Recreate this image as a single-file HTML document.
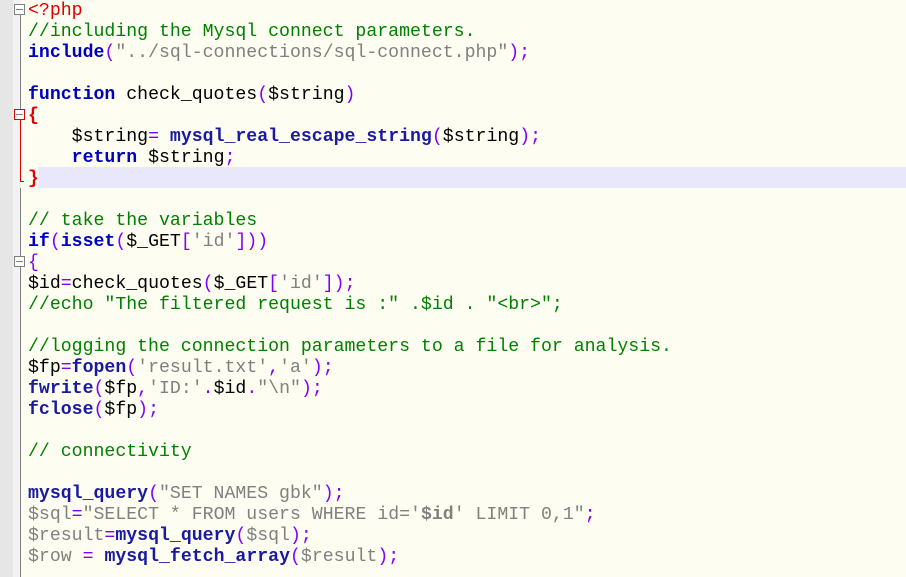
<!DOCTYPE html>
<html><head><style>
body{margin:0;width:906px;height:577px;background:#fefdf2;overflow:hidden;position:relative}
.g1{position:absolute;left:0;top:0;width:13px;height:577px;background:#e6e6e6}
.g2{position:absolute;left:13px;top:0;width:8px;height:577px;background:#f2f2f2}
.vl{position:absolute;left:20px;width:1px;background:#808080}
.hl{position:absolute;left:38px;top:167px;width:868px;height:21px;background:#e8e8fa}
.box{position:absolute;left:14px;width:11px;height:11px;border:1px solid #808080;background:#fff;box-sizing:border-box}
.box:after{content:"";position:absolute;left:1px;top:4px;width:7px;height:1px;background:#808080}
pre{position:absolute;left:28px;top:1px;margin:0;font-family:"Liberation Mono","Courier New",monospace;font-size:18.2px;line-height:21px;color:#000}
.k{color:#0000c0;font-weight:bold}
.f{font-weight:bold;color:#1a1aa0}
.o{color:#8000ff}
.s{color:#808080}
.c{color:#008000}
.r{color:#e00000}
.rb{color:#e00000;font-weight:bold}
.sb{color:#808080;font-weight:bold}
</style></head><body>
<div class="g1"></div><div class="g2"></div>
<div class="vl" style="top:15px;height:97px"></div>
<div class="vl" style="top:112px;height:70px;background:#e00000"></div>
<div style="position:absolute;left:20px;top:181px;width:4px;height:1px;background:#e00000"></div>
<div class="vl" style="top:188px;height:389px"></div>
<div class="hl"></div>
<div class="box" style="top:4px"></div>
<div class="box" style="top:109px;border-color:#e00000"></div>
<div class="box" style="top:256px"></div>
<pre><span class="r">&lt;?php</span>
<span class="c">//including the Mysql connect parameters.</span>
<span class="k">include</span><span class="o">(</span><span class="s">"../sql-connections/sql-connect.php"</span><span class="o">);</span>

<span class="k">function</span> check_quotes<span class="o">(</span>$string<span class="o">)</span>
<span class="rb">{</span>
    $string<span class="o">=</span> <span class="f">mysql_real_escape_string</span><span class="o">(</span>$string<span class="o">);</span>
    <span class="k">return</span> $string<span class="o">;</span>
<span class="rb">}</span>

<span class="c">// take the variables</span>
<span class="k">if</span><span class="o">(</span><span class="k">isset</span><span class="o">(</span>$_GET<span class="o">[</span><span class="s">'id'</span><span class="o">]))</span>
<span class="o">{</span>
$id<span class="o">=</span>check_quotes<span class="o">(</span>$_GET<span class="o">[</span><span class="s">'id'</span><span class="o">]);</span>
<span class="c">//echo "The filtered request is :" .$id . "&lt;br&gt;";</span>

<span class="c">//logging the connection parameters to a file for analysis.</span>
$fp<span class="o">=</span><span class="f">fopen</span><span class="o">(</span><span class="s">'result.txt'</span><span class="o">,</span><span class="s">'a'</span><span class="o">);</span>
<span class="f">fwrite</span><span class="o">(</span>$fp<span class="o">,</span><span class="s">'ID:'</span><span class="o">.</span>$id<span class="o">.</span><span class="s">"\n"</span><span class="o">);</span>
<span class="f">fclose</span><span class="o">(</span>$fp<span class="o">);</span>

<span class="c">// connectivity</span>

<span class="f">mysql_query</span><span class="o">(</span><span class="s">"SET NAMES gbk"</span><span class="o">);</span>
<span class="s">$sql</span><span class="o">=</span><span class="s">"SELECT * FROM users WHERE id='</span><span class="sb">$id</span><span class="s">' LIMIT 0,1"</span><span class="o">;</span>
<span class="s">$result</span><span class="o">=</span><span class="f">mysql_query</span><span class="o">(</span><span class="s">$sql</span><span class="o">);</span>
<span class="s">$row</span> <span class="o">=</span> <span class="f">mysql_fetch_array</span><span class="o">(</span><span class="s">$result</span><span class="o">);</span>
</pre>
</body></html>
